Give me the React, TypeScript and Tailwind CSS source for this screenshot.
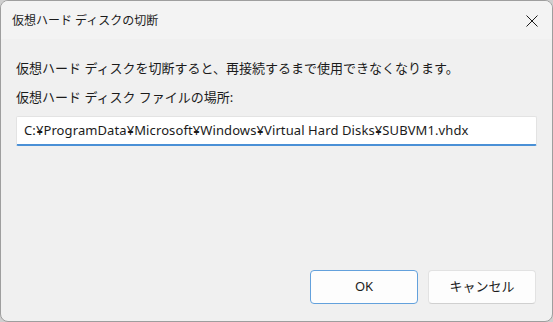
import React from "react";

const font = {
  fontFamily: '"Noto Sans", "Noto Sans CJK JP", sans-serif',
};

const App = () => {
  return (
    <div className="w-[553px] h-[322px] bg-[#cfcfcf] relative overflow-hidden" style={font}>
      <div className="absolute left-0 right-0 top-[221px] h-[15px] bg-[#2b2f7a]" />
      <div className="absolute inset-0 flex flex-col rounded-[8px] border border-[#9e9e9e] bg-[#f0f0f0] overflow-hidden text-[12px] text-[#1b1b1b]">
        <div className="h-[38px] shrink-0 flex items-center justify-between bg-[#f3f3f3] pl-[11px] pr-[14px] pt-[1px]">
          <span className="leading-none">仮想ハード ディスクの切断</span>
          <svg width="12" height="12" viewBox="0 0 12 12">
            <path d="M0.5 0.5 L11.5 11.5 M11.5 0.5 L0.5 11.5" stroke="#1b1b1b" strokeWidth="1" />
          </svg>
        </div>

        <div className="flex-1 flex flex-col px-[15px] pt-[20px] pb-[17px]">
          <p className="leading-[18px] text-[13px]">
            仮想ハード ディスクを切断すると、再接続するまで使用できなくなります。
          </p>
          <p className="leading-[18px] text-[13px] mt-[11px]">仮想ハード ディスク ファイルの場所:</p>
          <div className="mt-[10px] h-[30px] flex items-center bg-white border border-[#e3e3e3] border-b-2 border-b-[#4a90d6] rounded-[2px] pl-[7px] text-[13px] tracking-[0.1px]">
            C:¥ProgramData¥Microsoft¥Windows¥Virtual Hard Disks¥SUBVM1.vhdx
          </div>

          <div className="mt-auto flex justify-end gap-[10px] pr-[1px]">
            <button className="w-[108px] h-[34px] rounded-[4px] bg-[#fdfdfd] border border-[#63a1dc] text-[13px]">
              OK
            </button>
            <button className="w-[108px] h-[34px] rounded-[4px] bg-[#fdfdfd] border border-[#e2e2e2] border-b-[#d0d0d0] text-[13px]">
              キャンセル
            </button>
          </div>
        </div>
      </div>
    </div>
  );
};

export default App;
